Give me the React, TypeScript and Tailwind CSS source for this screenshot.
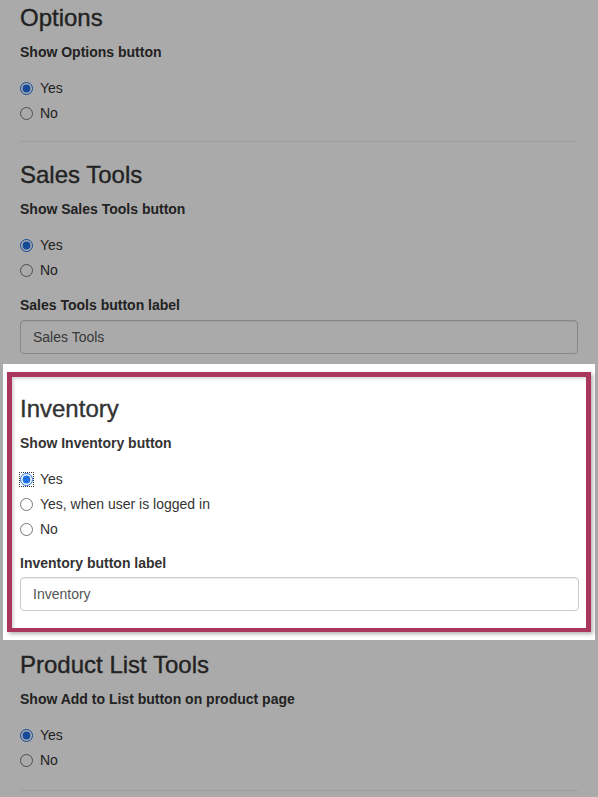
import React from 'react';

// Settings page with one section highlighted above a dim overlay
type Option = { label: string; checked?: boolean; focused?: boolean };

function Heading({ children }: { children: React.ReactNode }) {
  return (
    <h3 className="text-[24px] leading-[26px] font-medium text-[#333] [-webkit-text-stroke:0.35px_#333]">
      {children}
    </h3>
  );
}

function FieldLabel({ children, className = '' }: { children: React.ReactNode; className?: string }) {
  return <div className={`text-[14px] leading-[20px] font-bold text-[#333] ${className}`}>{children}</div>;
}

function RadioGroup({ name, options }: { name: string; options: Option[] }) {
  return (
    <div className="mt-[16px] flex flex-col gap-[5px]">
      {options.map((o) => (
        <label key={o.label} className="flex items-center h-[20px] text-[14px] text-[#333]">
          <input
            type="radio"
            name={name}
            defaultChecked={o.checked}
            className={`m-0 w-[13px] h-[13px] accent-[#1f6fe5] ${o.focused ? 'outline-1 outline-dotted outline-[#333] outline-offset-0' : ''}`}
          />
          <span className="ml-[7px]">{o.label}</span>
        </label>
      ))}
    </div>
  );
}

function TextField({ value, className = '' }: { value: string; className?: string }) {
  return (
    <input
      type="text"
      defaultValue={value}
      className={`block w-full h-[34px] px-3 text-[14px] text-[#555] bg-white border border-[#ccc] rounded-[4px] shadow-[inset_0_1px_1px_rgba(0,0,0,0.075)] outline-none ${className}`}
    />
  );
}

const yesNo: Option[] = [{ label: 'Yes', checked: true }, { label: 'No' }];

export default function App() {
  return (
    <div className="relative min-h-screen bg-white font-['Liberation_Sans',Arial,sans-serif] overflow-hidden">
      <div className="px-5 pt-[5px]">
        {/* Options */}
        <section>
          <Heading>Options</Heading>
          <FieldLabel className="mt-[11px]">Show Options button</FieldLabel>
          <RadioGroup name="options" options={yesNo} />
        </section>
        <hr className="mt-[18px] border-0 h-px bg-[#eee]" />

        {/* Sales Tools */}
        <section className="pt-[20px]">
          <Heading>Sales Tools</Heading>
          <FieldLabel className="mt-[11px]">Show Sales Tools button</FieldLabel>
          <RadioGroup name="sales" options={yesNo} />
          <FieldLabel className="mt-[15px]">Sales Tools button label</FieldLabel>
          <TextField value="Sales Tools" className="mt-[5px]" />
        </section>

        {/* Inventory - highlighted */}
        <div className="relative z-20 -mx-[17px] mt-[10px] bg-white px-[4px] py-[8px]">
          <div className="border-[5px] border-b-[4px] border-[#a9375d] pl-[8px] pr-[7px] pt-[19px] pb-[17px] shadow-[2px_2px_4px_rgba(0,0,0,0.3),inset_2px_2px_3px_rgba(0,0,0,0.15)]">
            <Heading>Inventory</Heading>
            <FieldLabel className="mt-[11px]">Show Inventory button</FieldLabel>
            <RadioGroup
              name="inventory"
              options={[
                { label: 'Yes', checked: true, focused: true },
                { label: 'Yes, when user is logged in' },
                { label: 'No' },
              ]}
            />
            <FieldLabel className="mt-[14px]">Inventory button label</FieldLabel>
            <TextField value="Inventory" className="mt-[4px]" />
          </div>
        </div>

        {/* Product List Tools */}
        <section className="pt-[12px]">
          <Heading>Product List Tools</Heading>
          <FieldLabel className="mt-[11px]">Show Add to List button on product page</FieldLabel>
          <RadioGroup name="productList" options={yesNo} />
        </section>
        <hr className="mt-[20px] border-0 h-px bg-[#eee]" />
        <div className="h-[40px]" />
      </div>

      {/* dim overlay */}
      <div className="pointer-events-none absolute inset-0 z-10 bg-[rgba(0,0,0,0.333)]" />
    </div>
  );
}
